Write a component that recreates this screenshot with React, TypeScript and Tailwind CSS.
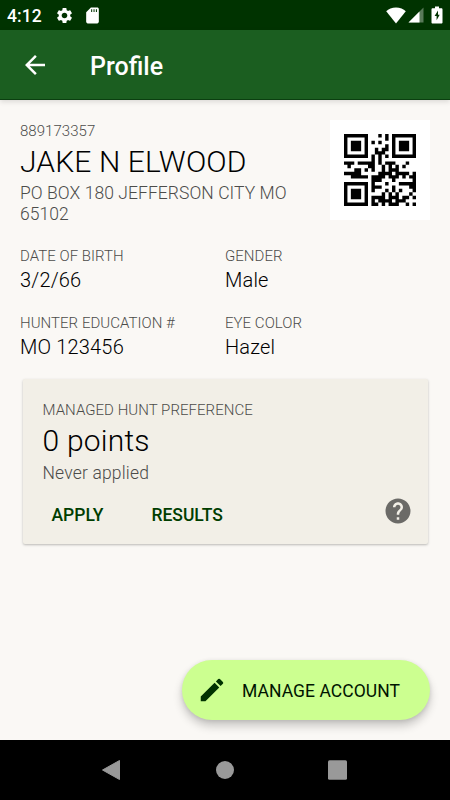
import type { ReactNode } from "react";

const QR_SIZE = 21;
/** Format info for error correction L with mask 0. */
const QR_FORMAT = "111011111000100";

const bin = (n: number, width: number) => n.toString(2).padStart(width, "0");

function gfMul(a: number, b: number) {
  let r = 0;
  while (b) {
    if (b & 1) r ^= a;
    a <<= 1;
    if (a & 256) a ^= 0x11d;
    b >>= 1;
  }
  return r;
}

/** Numeric payload -> 19 data codewords + 7 error correction codewords. */
function qrCodewords(value: string) {
  let bits = "0001" + bin(value.length, 10);
  for (let i = 0; i < value.length; i += 3) {
    const part = value.slice(i, i + 3);
    bits += bin(Number(part), part.length * 3 + 1);
  }
  bits += "0000";
  while (bits.length % 8) bits += "0";

  const data: number[] = [];
  for (let i = 0; i < bits.length; i += 8) data.push(parseInt(bits.slice(i, i + 8), 2));
  for (let i = 0; data.length < 19; i++) data.push(i % 2 ? 0x11 : 0xec);

  let gen = [1];
  let root = 1;
  for (let i = 0; i < 7; i++) {
    const next = [...gen, 0];
    gen.forEach((g, j) => (next[j + 1] ^= gfMul(g, root)));
    gen = next;
    root = gfMul(root, 2);
  }
  const rem = [...data, 0, 0, 0, 0, 0, 0, 0];
  for (let i = 0; i < 19; i++) {
    const f = rem[i];
    gen.forEach((g, j) => (rem[i + j] ^= gfMul(g, f)));
  }
  return [...data, ...rem.slice(19)].map((b) => bin(b, 8)).join("");
}

/** Version 1 symbol as rows of 0/1 modules. */
function qrMatrix(value: string) {
  const bits = qrCodewords(value);
  const m: number[][] = Array.from({ length: QR_SIZE }, () => Array(QR_SIZE).fill(-1));

  for (const [r0, c0] of [[0, 0], [0, 14], [14, 0]]) {
    for (let r = -1; r < 8; r++) {
      for (let c = -1; c < 8; c++) {
        if (m[r0 + r]?.[c0 + c] === undefined) continue;
        const d = Math.max(Math.abs(r - 3), Math.abs(c - 3));
        m[r0 + r][c0 + c] = d === 3 || d < 2 ? 1 : 0;
      }
    }
  }
  for (let i = 8; i < 13; i++) m[6][i] = m[i][6] = i % 2 ? 0 : 1;

  const f = QR_FORMAT.split("").map(Number);
  for (let i = 0; i < 6; i++) {
    m[8][i] = f[i];
    m[5 - i][8] = f[9 + i];
  }
  m[8][7] = f[6];
  m[8][8] = f[7];
  m[7][8] = f[8];
  for (let i = 0; i < 7; i++) m[20 - i][8] = f[i];
  for (let i = 0; i < 8; i++) m[8][13 + i] = f[7 + i];
  m[13][8] = 1;

  let k = 0;
  let up = true;
  for (let c = 20; c > 0; c -= 2) {
    if (c === 6) c--;
    for (let i = 0; i < QR_SIZE; i++) {
      const r = up ? 20 - i : i;
      for (const cc of [c, c - 1]) {
        if (m[r][cc] !== -1) continue;
        m[r][cc] = Number(bits[k++]) ^ ((r + cc) % 2 === 0 ? 1 : 0);
      }
    }
    up = !up;
  }
  return m;
}

function QrCode({ value }: { value: string }) {
  const d = qrMatrix(value)
    .flatMap((row, y) => row.map((on, x) => (on ? `M${x} ${y}h1v1h-1z` : "")))
    .join("");
  return (
    <div className="h-[100px] w-[100px] shrink-0 bg-white p-3.5">
      <svg viewBox="0 0 21 21" className="h-[72px] w-[72px]" role="img" aria-label="Conservation number">
        <path d={d} />
      </svg>
    </div>
  );
}

function StatusBar() {
  return (
    <div className="flex h-[30px] items-center bg-[#003300] pl-[7px] pr-[7px] text-white">
      <span className="w-[48px] pt-0.5 text-[17.5px] font-medium leading-[28px] tracking-[0.1px]">4:12</span>
      <svg viewBox="0 0 24 24" className="h-[19px] w-[19px]" fill="currentColor">
        <path d="M19.14 12.94c.04-.3.06-.61.06-.94 0-.32-.02-.64-.07-.94l2.03-1.58a.49.49 0 0 0 .12-.61l-1.92-3.32a.488.488 0 0 0-.59-.22l-2.39.96c-.5-.38-1.03-.7-1.62-.94l-.36-2.54a.484.484 0 0 0-.48-.41h-3.84c-.24 0-.43.17-.47.41l-.36 2.54c-.59.24-1.13.57-1.62.94l-2.39-.96c-.22-.08-.47 0-.59.22L2.74 8.87c-.12.21-.08.47.12.61l2.03 1.58c-.05.3-.09.63-.09.94s.02.64.07.94l-2.03 1.58a.49.49 0 0 0-.12.61l1.92 3.32c.12.22.37.29.59.22l2.39-.96c.5.38 1.03.7 1.62.94l.36 2.54c.05.24.24.41.48.41h3.84c.24 0 .44-.17.47-.41l.36-2.54c.59-.24 1.13-.56 1.62-.94l2.39.96c.22.08.47 0 .59-.22l1.92-3.32c.12-.22.07-.47-.12-.61l-2.01-1.58zM12 15.6c-1.98 0-3.6-1.62-3.6-3.6s1.62-3.6 3.6-3.6 3.6 1.62 3.6 3.6-1.62 3.6-3.6 3.6z" />
      </svg>
      <svg viewBox="0 0 24 24" className="ml-[9px] h-[19px] w-[19px]" fill="currentColor">
        <path d="M18 2h-8L4.020 8 4 20c0 1.100.9 2 2 2h12c1.100 0 2-.9 2-2V4c0-1.100-.9-2-2-2zm-6.400 5.500h-1.300V4h1.300v3.500zm3 0h-1.300V4h1.300v3.500zm3 0h-1.300V4h1.300v3.500z" />
      </svg>
      <div className="ml-auto flex items-center">
        <svg viewBox="0 0 20 17" className="h-[17px] w-5" fill="currentColor">
          <path d="M10 16.600 0.200 4.200C2.500 1.900 6 .5 10 .5s7.500 1.400 9.800 3.700z" />
        </svg>
        <svg viewBox="0 0 16 16" className="ml-0.5 h-4 w-4" fill="currentColor">
          <path d="M15.500 0.500v15h-15z" opacity=".35" />
          <path d="M11.500 4.500v11H.5z" />
        </svg>
        <svg viewBox="0 0 12 18" className="ml-[7px] h-[18px] w-3" fill="currentColor">
          <path
            fillRule="evenodd"
            d="M4 .5h4v1.700h2.300c.7 0 1.200.5 1.200 1.200v13c0 .7-.5 1.100-1.200 1.100H1.700c-.7 0-1.200-.4-1.200-1.100v-13c0-.7.5-1.200 1.200-1.200H4zM7 4.500 3.600 10h2v4.300L8.700 8.700H7z"
          />
        </svg>
      </div>
    </div>
  );
}

function AppBar({ title }: { title: string }) {
  return (
    <header className="relative z-10 flex h-[70px] items-center border-b border-[#0b3f10] bg-[#1b5e20] pl-5 text-white shadow-[0_2px_5px_rgba(0,0,0,0.12)]">
      <button aria-label="Back">
        <svg viewBox="0 0 24 24" className="h-[30px] w-[30px]" fill="currentColor">
          <path d="M20 11H7.830l5.590-5.590L12 4l-8 8 8 8 1.410-1.410L7.830 13H20v-2z" />
        </svg>
      </button>
      <h1 className="ml-10 pt-1 text-[25px] font-medium leading-[30px]">{title}</h1>
    </header>
  );
}

function Label({ children }: { children: ReactNode }) {
  return (
    <div className="whitespace-nowrap text-[15px] font-light leading-[22px] tracking-[0.04px] text-[#4c4c4a]">
      {children}
    </div>
  );
}

function Field({ label, value }: { label: string; value: string }) {
  return (
    <div>
      <Label>{label}</Label>
      <div className="text-[20px] font-light leading-[26px] tracking-[0.18px] text-black">{value}</div>
    </div>
  );
}

function HuntCard() {
  return (
    <section className="ml-[22.5px] mr-[22.5px] mt-[19px] h-[165px] rounded-[2px] bg-[#f2efe7] px-[20px] pt-5 shadow-[0_1px_2.5px_rgba(0,0,0,0.26)]">
      <Label>MANAGED HUNT PREFERENCE</Label>
      <div className="text-[30px] font-light leading-[40px] tracking-[0.22px] text-black">0 points</div>
      <div className="mt-0.5 text-[17.5px] font-light leading-[21px] tracking-[0.17px] text-[#4c4c4a]">
        Never applied
      </div>
      <div className="mt-3 flex h-[30px] items-center pl-[9px] text-[17.5px] font-medium text-[#003d00]">
        <button className="pt-2">APPLY</button>
        <button className="ml-12 pt-2">RESULTS</button>
        <svg viewBox="0 0 24 24" className="-mr-[5px] ml-auto h-[30px] w-[30px]" fill="#6b6a67">
          <path d="M12 2C6.480 2 2 6.480 2 12s4.480 10 10 10 10-4.480 10-10S17.520 2 12 2zm1 17h-2v-2h2v2zm2.070-7.750-.9.920C13.450 12.900 13 13.500 13 15h-2v-.5c0-1.100.45-2.100 1.170-2.830l1.240-1.260c.370-.360.590-.860.590-1.410 0-1.100-.9-2-2-2s-2 .9-2 2H8c0-2.210 1.790-4 4-4s4 1.790 4 4c0 .880-.360 1.680-.930 2.250z" />
        </svg>
      </div>
    </section>
  );
}

function NavigationBar() {
  return (
    <nav className="h-[60px] bg-black">
      <svg viewBox="0 0 450 60" className="h-[60px] w-[450px]" fill="#999">
        <path d="M119.500 20.500v19L102.500 30z" stroke="#999" strokeLinejoin="round" />
        <circle cx="225" cy="30" r="9" />
        <rect x="328" y="20.200" width="19" height="19.600" rx="1.500" />
      </svg>
    </nav>
  );
}

export default function App() {
  return (
    <div className="flex h-[800px] w-[450px] flex-col overflow-hidden bg-[#faf8f5] font-['Roboto',sans-serif]">
      <StatusBar />
      <AppBar title="Profile" />
      <main className="flex flex-1 flex-col">
        <div className="flex justify-between pl-5 pr-5 pt-5">
          <div className="w-[290px]">
            <Label>889173357</Label>
            <div className="whitespace-nowrap text-[30px] font-light leading-[40px] tracking-[0.13px] text-black">
              JAKE N ELWOOD
            </div>
            <div className="mt-px text-[17.5px] font-light leading-[21px] tracking-[0.06px] text-[#4c4c4a]">
              PO BOX 180 JEFFERSON CITY MO 65102
            </div>
          </div>
          <QrCode value="889173357" />
        </div>
        <div className="mt-5 grid grid-cols-[205px_1fr] gap-y-[19px] pl-5">
          <Field label="DATE OF BIRTH" value="3/2/66" />
          <Field label="GENDER" value="Male" />
          <Field label="HUNTER EDUCATION #" value="MO 123456" />
          <Field label="EYE COLOR" value="Hazel" />
        </div>
        <HuntCard />
        <button className="mb-5 ml-auto mr-5 mt-auto flex h-[60px] w-[248px] items-center rounded-full bg-[#ccff90] pl-[15px] text-[17.5px] font-normal tracking-[0.06px] text-[#001400] shadow-[0_6px_10px_rgba(0,0,0,0.2),0_1px_4px_rgba(0,0,0,0.1)]">
          <svg viewBox="0 0 24 24" className="h-[30px] w-[30px]" fill="#003300">
            <path d="M3 17.250V21h3.750L17.810 9.940l-3.750-3.750L3 17.250zM20.710 7.040a.996.996 0 0 0 0-1.410l-2.340-2.340a.996.996 0 0 0-1.410 0l-1.830 1.830 3.750 3.750 1.830-1.830z" />
          </svg>
          <span className="ml-[15px] whitespace-nowrap pt-0.5">MANAGE ACCOUNT</span>
        </button>
      </main>
      <NavigationBar />
    </div>
  );
}
